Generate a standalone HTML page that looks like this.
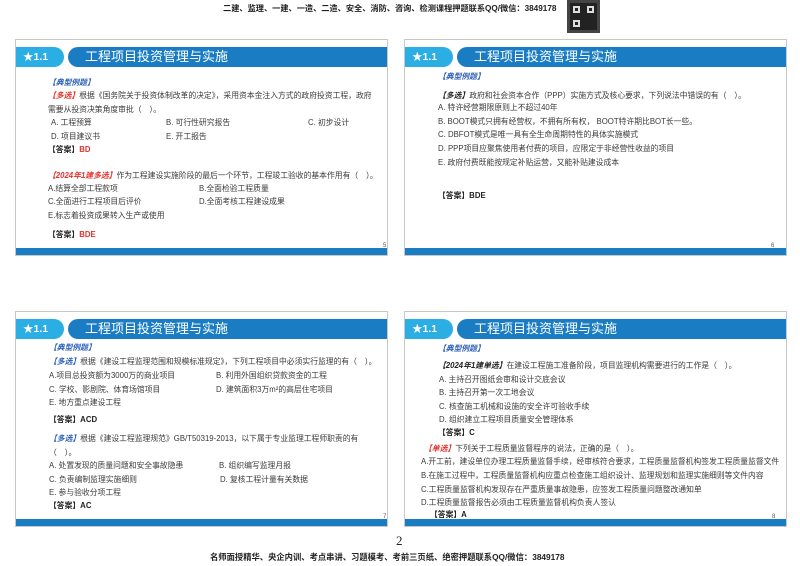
<!DOCTYPE html>
<html><head><meta charset="utf-8"><style>
*{margin:0;padding:0;box-sizing:border-box}
body{width:800px;height:566px;background:#fff;position:relative;overflow:hidden;font-family:"Liberation Sans","Noto Sans CJK SC",sans-serif;color:#333}
.t{position:absolute;white-space:nowrap;font-size:7.8px;line-height:10px;color:#3a3a3a}
.s{position:absolute;border:1px solid #c8c8c8;background:#fff}
.bd{position:absolute;left:0;height:20px;width:48px;background:#2aaee4;border-radius:0 10px 10px 0;color:#fff;font-weight:bold;font-size:10.5px;line-height:20px;padding-left:7px}
.hd{position:absolute;left:52px;right:0;height:20px;background:#1a7dc3;border-radius:10px 0 0 10px;color:#fff;font-size:13px;line-height:20px;padding-left:17px}
.bb{position:absolute;left:0;right:0;bottom:0;height:7px;background:#1a7dc3}
.pn{position:absolute;font-size:6px;color:#555}
.blue{color:#2b5fb8;font-style:italic;font-weight:bold}
.red{color:#e5322d;font-style:italic;font-weight:bold}
.r{color:#e5322d;font-weight:bold}
b{font-weight:bold;color:#222}
</style></head><body>
<div class="t" style="left:223px;top:4px;font-size:8.2px;font-weight:bold;color:#222">二建、监理、一建、一造、二造、安全、消防、咨询、检测课程押题联系QQ/微信：3849178</div>
<div style="position:absolute;left:567px;top:0;width:33px;height:33px;background:#222;border:3px solid #444"><div style="position:absolute;left:3px;top:3px;width:7px;height:7px;border:2px solid #ddd"></div><div style="position:absolute;right:3px;top:3px;width:7px;height:7px;border:2px solid #ddd"></div><div style="position:absolute;left:3px;bottom:3px;width:7px;height:7px;border:2px solid #ddd"></div></div>

<!-- slide 1 -->
<div class="s" style="left:15px;top:39px;width:373px;height:217px">
<div class="bd" style="top:7px">★1.1</div><div class="hd" style="top:7px">工程项目投资管理与实施</div><div class="bb"></div><div class="pn" style="left:367px;top:203px">5</div></div>
<div class="t blue" style="left:48px;top:78px">【典型例题】</div>
<div class="t" style="left:48px;top:91px"><span class="red">【多选】</span>根据《国务院关于投资体制改革的决定》，采用资本金注入方式的政府投资工程，政府</div>
<div class="t" style="left:48px;top:105px">需要从投资决策角度审批（　）。</div>
<div class="t" style="left:51px;top:118px">A. 工程预算</div><div class="t" style="left:166px;top:118px">B. 可行性研究报告</div><div class="t" style="left:308px;top:118px">C. 初步设计</div>
<div class="t" style="left:51px;top:132px">D. 项目建议书</div><div class="t" style="left:166px;top:132px">E. 开工报告</div>
<div class="t" style="left:48px;top:145px"><b>【答案】</b><span class="r">BD</span></div>
<div class="t" style="left:48px;top:171px"><span class="red">【2024年1建多选】</span>作为工程建设实施阶段的最后一个环节，工程竣工验收的基本作用有（　）。</div>
<div class="t" style="left:48px;top:184px">A.结算全部工程款项</div><div class="t" style="left:199px;top:184px">B.全面检验工程质量</div>
<div class="t" style="left:48px;top:197px">C.全面进行工程项目后评价</div><div class="t" style="left:199px;top:197px">D.全面考核工程建设成果</div>
<div class="t" style="left:48px;top:211px">E.标志着投资成果转入生产或使用</div>
<div class="t" style="left:48px;top:230px"><b>【答案】</b><span class="r">BDE</span></div>

<!-- slide 2 -->
<div class="s" style="left:404px;top:39px;width:383px;height:217px">
<div class="bd" style="top:7px">★1.1</div><div class="hd" style="top:7px">工程项目投资管理与实施</div><div class="bb"></div><div class="pn" style="left:366px;top:203px">6</div></div>
<div class="t blue" style="left:438px;top:72px">【典型例题】</div>
<div class="t" style="left:438px;top:91px"><b style="font-style:italic">【多选】</b>政府和社会资本合作（PPP）实施方式及核心要求，下列说法中错误的有（　）。</div>
<div class="t" style="left:438px;top:103px">A. 特许经营期限原则上不超过40年</div>
<div class="t" style="left:438px;top:117px">B. BOOT模式只拥有经营权，不拥有所有权， BOOT特许期比BOT长一些。</div>
<div class="t" style="left:438px;top:130px">C. DBFOT模式是唯一具有全生命周期特性的具体实施模式</div>
<div class="t" style="left:438px;top:144px">D. PPP项目应聚焦使用者付费的项目，应限定于非经营性收益的项目</div>
<div class="t" style="left:438px;top:158px">E. 政府付费既能按规定补贴运营，又能补贴建设成本</div>
<div class="t" style="left:438px;top:191px"><b>【答案】BDE</b></div>

<!-- slide 3 -->
<div class="s" style="left:15px;top:311px;width:373px;height:216px">
<div class="bd" style="top:7px">★1.1</div><div class="hd" style="top:7px">工程项目投资管理与实施</div><div class="bb"></div><div class="pn" style="left:367px;top:202px">7</div></div>
<div class="t blue" style="left:49px;top:343px">【典型例题】</div>
<div class="t" style="left:49px;top:357px"><span class="blue">【多选】</span>根据《建设工程监理范围和规模标准规定》，下列工程项目中必须实行监理的有（　）。</div>
<div class="t" style="left:49px;top:371px">A.项目总投资额为3000万的商业项目</div><div class="t" style="left:216px;top:371px">B. 利用外国组织贷款资金的工程</div>
<div class="t" style="left:49px;top:385px">C. 学校、影剧院、体育场馆项目</div><div class="t" style="left:216px;top:385px">D. 建筑面积3万m²的高层住宅项目</div>
<div class="t" style="left:49px;top:398px">E. 地方重点建设工程</div>
<div class="t" style="left:49px;top:415px"><b>【答案】ACD</b></div>
<div class="t" style="left:49px;top:434px"><span class="blue">【多选】</span>根据《建设工程监理规范》GB/T50319-2013，以下属于专业监理工程师职责的有</div>
<div class="t" style="left:49px;top:448px">（　）。</div>
<div class="t" style="left:49px;top:461px">A. 处置发现的质量问题和安全事故隐患</div><div class="t" style="left:219px;top:461px">B. 组织编写监理月报</div>
<div class="t" style="left:49px;top:475px">C. 负责编制监理实施细则</div><div class="t" style="left:220px;top:475px">D. 复核工程计量有关数据</div>
<div class="t" style="left:49px;top:488px">E. 参与验收分项工程</div>
<div class="t" style="left:49px;top:501px"><b>【答案】AC</b></div>

<!-- slide 4 -->
<div class="s" style="left:404px;top:311px;width:383px;height:216px">
<div class="bd" style="top:7px">★1.1</div><div class="hd" style="top:7px">工程项目投资管理与实施</div><div class="bb"></div><div class="pn" style="left:367px;top:202px">8</div></div>
<div class="t blue" style="left:438px;top:344px">【典型例题】</div>
<div class="t" style="left:438px;top:361px"><b style="font-style:italic">【2024年1建单选】</b>在建设工程施工准备阶段，项目监理机构需要进行的工作是（　）。</div>
<div class="t" style="left:439px;top:375px">A. 主持召开图纸会审和设计交底会议</div>
<div class="t" style="left:439px;top:388px">B. 主持召开第一次工地会议</div>
<div class="t" style="left:439px;top:402px">C. 核查施工机械和设施的安全许可验收手续</div>
<div class="t" style="left:439px;top:415px">D. 组织建立工程项目质量安全管理体系</div>
<div class="t" style="left:438px;top:428px"><b>【答案】C</b></div>
<div class="t" style="left:424px;top:444px"><span class="red">【单选】</span>下列关于工程质量监督程序的说法，正确的是（　）。</div>
<div class="t" style="left:421px;top:457px">A.开工前，建设单位办理工程质量监督手续，经审核符合要求，工程质量监督机构签发工程质量监督文件</div>
<div class="t" style="left:421px;top:471px">B.在施工过程中，工程质量监督机构应重点检查施工组织设计、监理规划和监理实施细则等文件内容</div>
<div class="t" style="left:421px;top:485px">C.工程质量监督机构发现存在严重质量事故隐患，应签发工程质量问题整改通知单</div>
<div class="t" style="left:421px;top:498px">D.工程质量监督报告必须由工程质量监督机构负责人签认</div>
<div class="t" style="left:430px;top:510px"><b>【答案】A</b></div>

<div class="t" style="left:396px;top:534px;font-size:13px;line-height:14px;font-family:'Liberation Serif',serif;color:#222">2</div>
<div class="t" style="left:210px;top:552px;font-size:8.3px;font-weight:bold;color:#222">名师面授精华、央企内训、考点串讲、习题模考、考前三页纸、绝密押题联系QQ/微信：3849178</div>
</body></html>
